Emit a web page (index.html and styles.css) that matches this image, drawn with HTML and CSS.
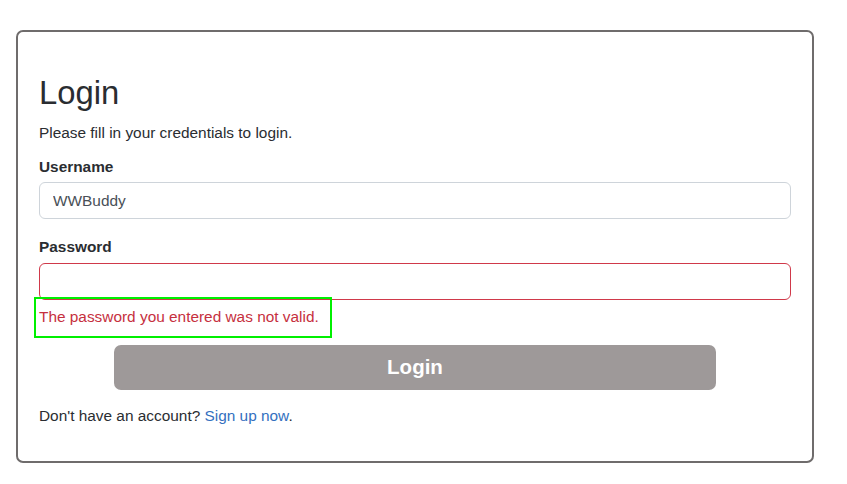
FILE: index.html
```html
<!DOCTYPE html>
<html lang="en">
<head>
    <meta charset="UTF-8">
    <meta name="viewport" content="width=device-width, initial-scale=1.0">
    <title>Login</title>
    <link rel="stylesheet" href="styles.css">
</head>
<body>
    <div class="wrapper">
        <h2>Login</h2>
        <p class="intro">Please fill in your credentials to login.</p>
        <form action="#" method="post">
            <div class="form-group">
                <label for="username">Username</label>
                <input type="text" id="username" name="username" class="form-control" value="WWBuddy">
            </div>
            <div class="form-group has-error">
                <label for="password">Password</label>
                <input type="password" id="password" name="password" class="form-control is-invalid">
                <div class="invalid-feedback">The password you entered was not valid.</div>
            </div>
            <div class="form-actions">
                <button type="submit" class="btn-login">Login</button>
            </div>
            <p class="signup">Don't have an account? <a href="register.html">Sign up now</a>.</p>
        </form>
    </div>
</body>
</html>
```

FILE: styles.css
```css
body {
    margin: 0;
    padding: 30px 0 0 16px;
    font-family: "Liberation Sans", Arial, sans-serif;
    font-size: 15.4px;
    line-height: 22.5px;
    color: #2a2d31;
    background: #fff;
}

.wrapper {
    box-sizing: border-box;
    width: 798px;
    height: 433px;
    padding: 42px 21px 0 21px;
    border: 2px solid #6f6c6c;
    border-radius: 7px;
}

h2 {
    margin: 0 0 10px 0;
    font-size: 32.8px;
    font-weight: 400;
    line-height: 38px;
}

.intro {
    margin: 0 0 11px 0;
}

.form-group {
    margin-bottom: 17px;
}

.form-group.has-error {
    margin-bottom: 16px;
}

.form-group label {
    display: block;
    font-weight: bold;
    margin-bottom: 4px;
}

.form-control {
    display: block;
    box-sizing: border-box;
    width: 100%;
    height: 37px;
    padding: 6px 13px;
    font-family: inherit;
    font-size: 15.4px;
    color: #495057;
    background: #fff;
    border: 1px solid #ced4da;
    border-radius: 6px;
    outline: none;
}

.form-control.is-invalid {
    border-color: #d0394a;
}

.invalid-feedback {
    position: relative;
    margin-top: 6.5px;
    color: #c6303e;
}

/* highlight frame around the error message */
.invalid-feedback::after {
    content: "";
    position: absolute;
    left: -5px;
    top: -9px;
    width: 298px;
    height: 41px;
    box-sizing: border-box;
    border: 2px solid #00f000;
}

.form-actions {
    display: flex;
    justify-content: center;
}

.btn-login {
    width: 80%;
    height: 45px;
    border: none;
    border-radius: 7px;
    background: #9e9999;
    color: #fff;
    font-family: inherit;
    font-size: 20.5px;
    font-weight: bold;
    cursor: pointer;
}

.signup {
    margin: 15px 0 0 0;
}

.signup a {
    color: #3470c0;
    text-decoration: none;
}
```
